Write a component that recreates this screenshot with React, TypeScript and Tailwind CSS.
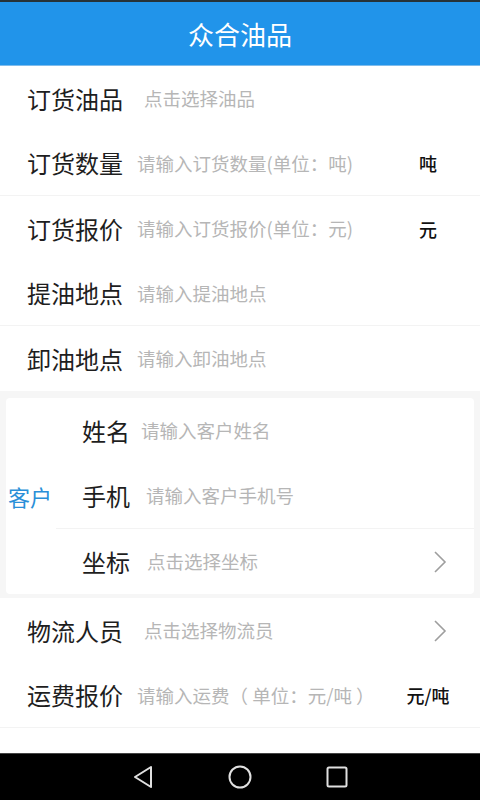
import React from "react";

const font = { fontFamily: '"Noto Sans CJK SC", "Noto Sans", sans-serif' };

function Chevron() {
  return (
    <svg width="14" height="24" viewBox="0 0 14 24" className="shrink-0">
      <path d="M2 2 L12 12 L2 22" fill="none" stroke="#9e9e9e" strokeWidth="1.6" />
    </svg>
  );
}

function Row({
  label,
  placeholder,
  unit,
  arrow,
  phPad,
  divider,
}: {
  label: string;
  placeholder: string;
  unit?: string;
  arrow?: boolean;
  phPad: string;
  divider?: boolean;
}) {
  return (
    <div className={`flex h-[65px] items-center pl-[27px] ${divider ? "border-b border-[#f3f3f3]" : ""}`}>
      <span className="text-[24px] leading-none text-[#1e1e1e] w-[96px] shrink-0">{label}</span>
      <span className={`text-[18.5px] leading-none text-[#b6b6b6] flex-1 whitespace-pre ${phPad}`}>{placeholder}</span>
      {unit && (
        <span className="text-[18px] leading-none text-[#111] font-medium w-[60px] mr-[22px] text-center">{unit}</span>
      )}
      {arrow && (
        <span className="mr-[33px] flex items-center">
          <Chevron />
        </span>
      )}
    </div>
  );
}

function SubRow({
  label,
  placeholder,
  arrow,
  phPad,
}: {
  label: string;
  placeholder: string;
  arrow?: boolean;
  phPad: string;
}) {
  return (
    <div className="flex h-[65px] items-center pl-[76px]">
      <span className="text-[24px] leading-none text-[#1e1e1e] w-[50px] shrink-0">{label}</span>
      <span className={`text-[18.5px] leading-none text-[#b6b6b6] flex-1 whitespace-nowrap ${phPad}`}>{placeholder}</span>
      {arrow && (
        <span className="mr-[27px] flex items-center">
          <Chevron />
        </span>
      )}
    </div>
  );
}

export default function App() {
  return (
    <div className="w-[480px] h-[800px] flex flex-col bg-white overflow-hidden" style={font}>
      <div className="h-[2px] bg-[#263238]" />
      <div className="h-[64px] bg-[#2194ea] flex items-center justify-center border-b border-[#7fbcec]">
        <span className="text-[26px] text-white leading-none">众合油品</span>
      </div>
      <Row label="订货油品" placeholder="点击选择油品" phPad="pl-[21px]" />
      <Row label="订货数量" placeholder="请输入订货数量(单位：吨)" unit="吨" phPad="pl-[14px]" divider />
      <Row label="订货报价" placeholder="请输入订货报价(单位：元)" unit="元" phPad="pl-[14px]" />
      <Row label="提油地点" placeholder="请输入提油地点" phPad="pl-[14px]" divider />
      <Row label="卸油地点" placeholder="请输入卸油地点" phPad="pl-[14px]" />
      <div className="bg-[#f6f6f6] px-[6px] pt-[7px] pb-[4px]">
        <div className="bg-white rounded-[4px] flex">
          <div className="w-[50px] flex items-center pl-[2px]">
            <span className="text-[22px] leading-none text-[#2a8fd8]">客户</span>
          </div>
          <div className="flex-1 flex flex-col -ml-[50px]">
            <SubRow label="姓名" placeholder="请输入客户姓名" phPad="pl-[9px]" />
            <div className="ml-[50px] border-b border-[#f3f3f3]">
              <div className="-ml-[50px]">
                <SubRow label="手机" placeholder="请输入客户手机号" phPad="pl-[14px]" />
              </div>
            </div>
            <SubRow label="坐标" placeholder="点击选择坐标" arrow phPad="pl-[15px]" />
          </div>
        </div>
      </div>
      <Row label="物流人员" placeholder="点击选择物流员" arrow phPad="pl-[21px]" />
      <Row label="运费报价" placeholder="请输入运费（ 单位：元/吨 ）" unit="元/吨" phPad="pl-[14px]" divider />
      <div className="flex-1" />
      <div className="h-[47px] bg-black flex items-center justify-center gap-[74px] border-t border-[#444]">
        <svg width="22" height="24" viewBox="0 0 22 24">
          <path d="M19 2 L3 12 L19 22 Z" fill="none" stroke="#e0e0e0" strokeWidth="2" strokeLinejoin="round" />
        </svg>
        <svg width="24" height="24" viewBox="0 0 24 24">
          <circle cx="12" cy="12" r="10.5" fill="none" stroke="#e0e0e0" strokeWidth="2" />
        </svg>
        <svg width="22" height="22" viewBox="0 0 22 22">
          <rect x="1.5" y="1.5" width="19" height="19" rx="1.5" fill="none" stroke="#e0e0e0" strokeWidth="2" />
        </svg>
      </div>
    </div>
  );
}
